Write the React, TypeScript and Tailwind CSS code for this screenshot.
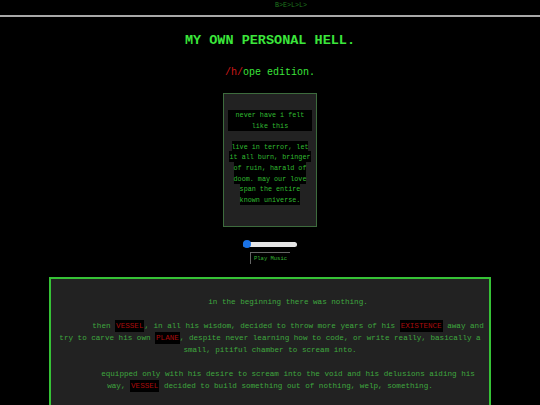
import React from "react";

const Hl = ({ children }: { children: React.ReactNode }) => (
  <span className="bg-black px-[1px] py-[2px] text-[#a80c0c]">{children}</span>
);

export default function App() {
  return (
    <div className="h-[405px] overflow-hidden bg-black font-['Liberation_Mono',monospace]">
      {/* marquee-ish header */}
      <div className="h-[11px] pl-[275px] text-[6.7px] leading-[11px] text-[#1f7a1f]">B&gt;E&gt;L&gt;L&gt;</div>
      <div className="mt-[4px] border-t-2 border-[#a8a8a8]" />

      <h1 className="mt-[16px] text-center text-[13.5px] font-bold leading-[16px] text-[#3be63b]">
        MY OWN PERSONAL HELL.
      </h1>
      <p className="mt-[18px] text-center text-[10px] leading-[12px] text-[#3be63b]">
        <span className="text-[#d01818]">/h/</span>ope edition.
      </p>

      {/* quote box */}
      <div className="mx-auto mt-[14px] h-[134px] w-[94px] border border-[#3d6b3d] bg-[#222] pt-[16px] text-[6.75px] text-[#30bb30]">
        <div className="mx-[4px] bg-black text-center leading-[10.5px]">
          never have i felt
          <br />
          like this
        </div>
        <p className="mt-[10px] px-[4px] text-center leading-[10.7px]">
          <span className="bg-black py-[1.5px] [box-decoration-break:clone]">
            live in terror, let it all burn, bringer of ruin, harald of doom. may our love span the entire known universe.
          </span>
        </p>
      </div>

      {/* music controls */}
      <div className="mx-auto mt-[13px] flex h-[8px] w-[54px] items-center">
        <div className="relative h-[5px] w-full rounded-full bg-[#e6e6e6]">
          <div className="absolute left-0 top-0 h-[5px] w-[6px] rounded-l-full bg-[#1a73e8]" />
          <div className="absolute left-0 top-[-1.5px] h-[8px] w-[8px] rounded-full bg-[#1a73e8]" />
        </div>
      </div>
      <div className="mt-[4px] flex justify-center">
        <button className="h-[12px] w-[40px] border-l border-t border-[#666] bg-black text-[5.5px] leading-[10px] text-[#35b835]">
          Play Music
        </button>
      </div>

      {/* story */}
      <div className="ml-[49px] mt-[13px] w-[442px] whitespace-nowrap border-2 border-[#36c236] bg-[#222] px-[4px] pt-[17px] pb-[20px] text-center text-[7.6px] leading-[12px] text-[#3fa83f]">
        <p className="indent-[36px]">in the beginning there was nothing.</p>
        <p className="mt-[12px] indent-[36px]">
          then <Hl>VESSEL</Hl>, in all his wisdom, decided to throw more years of his <Hl>EXISTENCE</Hl> away and
          <br />
          try to carve his own <Hl>PLANE</Hl>, despite never learning how to code, or write really, basically a
          <br />
          small, pitiful chamber to scream into.
        </p>
        <p className="mt-[12px] indent-[36px]">
          equipped only with his desire to scream into the void and his delusions aiding his
          <br />
          way, <Hl>VESSEL</Hl> decided to build something out of nothing, welp, something.
        </p>
      </div>
    </div>
  );
}
